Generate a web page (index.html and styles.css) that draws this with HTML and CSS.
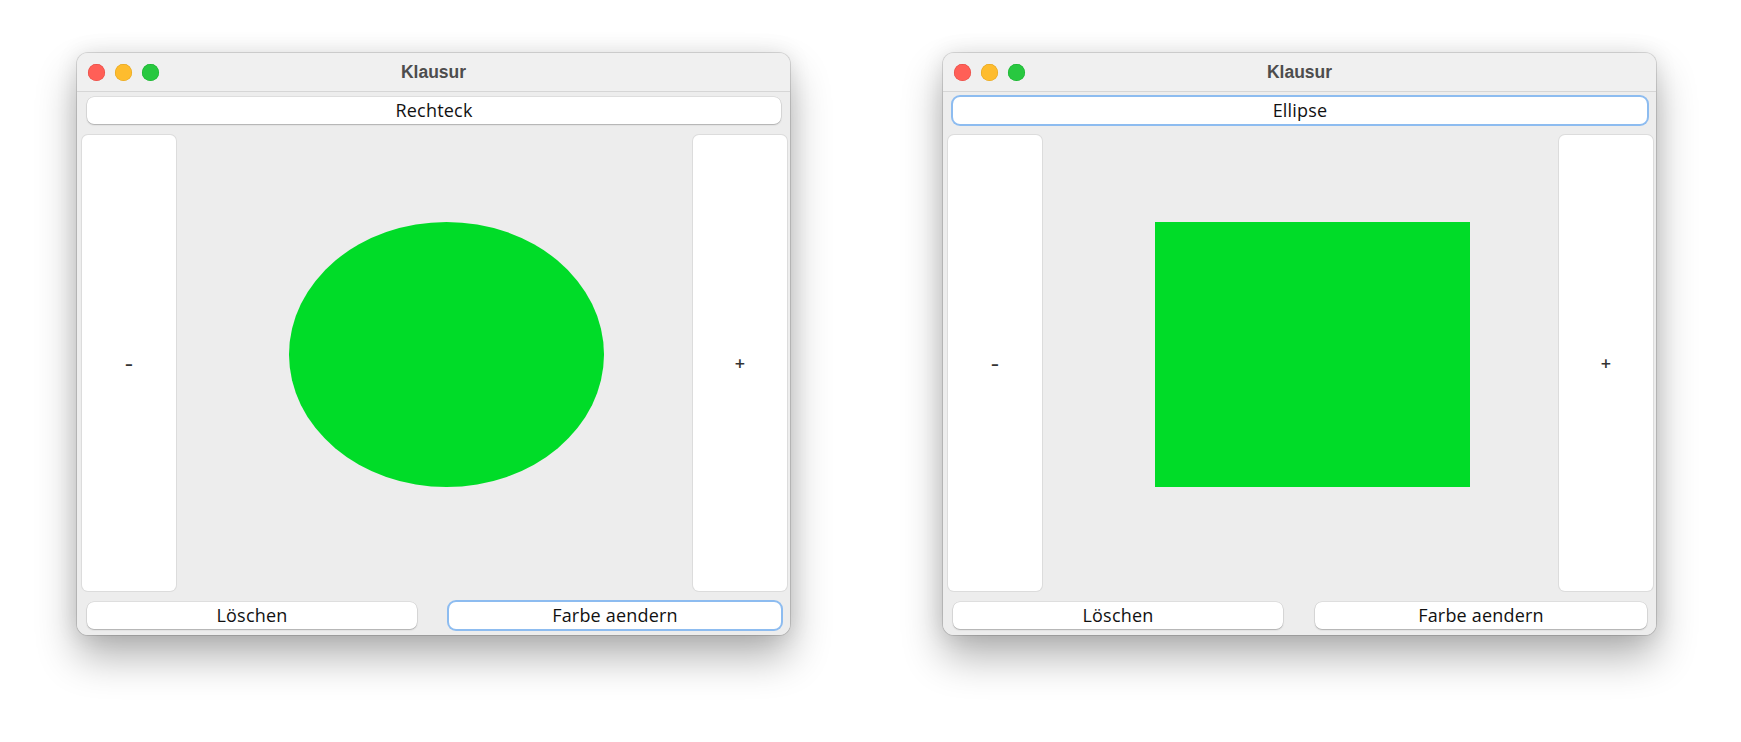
FILE: index.html
```html
<!DOCTYPE html>
<html lang="de">
<head>
<meta charset="utf-8">
<title>Klausur</title>
<link rel="stylesheet" href="styles.css">
</head>
<body>
<div class="desk">
  <div class="window">
    <div class="titlebar">
      <div class="lights">
        <span class="light red"></span>
        <span class="light yellow"></span>
        <span class="light green"></span>
      </div>
      <div class="title">Klausur</div>
    </div>
    <div class="content">
      <div class="top-row">
        <div class="btn wide">Rechteck</div>
      </div>
      <div class="mid-row">
        <div class="btn side"><span class="sign minus">-</span></div>
        <div class="canvas">
          <div class="shape ellipse"></div>
        </div>
        <div class="btn side"><span class="sign">+</span></div>
      </div>
      <div class="bottom-row">
        <div class="btn half left">Löschen</div>
        <div class="btn half right focus">Farbe aendern</div>
      </div>
    </div>
  </div>

  <div class="window">
    <div class="titlebar">
      <div class="lights">
        <span class="light red"></span>
        <span class="light yellow"></span>
        <span class="light green"></span>
      </div>
      <div class="title">Klausur</div>
    </div>
    <div class="content">
      <div class="top-row">
        <div class="btn wide focus">Ellipse</div>
      </div>
      <div class="mid-row">
        <div class="btn side"><span class="sign minus">-</span></div>
        <div class="canvas">
          <div class="shape rect"></div>
        </div>
        <div class="btn side"><span class="sign">+</span></div>
      </div>
      <div class="bottom-row">
        <div class="btn half left">Löschen</div>
        <div class="btn half right">Farbe aendern</div>
      </div>
    </div>
  </div>
</div>
</body>
</html>
```

FILE: styles.css
```css
* { box-sizing: border-box; }

html, body {
  margin: 0;
  padding: 0;
  background: #ffffff;
  width: 1741px;
  height: 742px;
  overflow: hidden;
}

.desk {
  display: flex;
  gap: 153px;
  padding-left: 77px;
  padding-top: 53px;
}

.window {
  width: 713px;
  height: 582px;
  border-radius: 11px;
  background: #ececec;
  overflow: hidden;
  box-shadow:
    0 0 0 1px rgba(0, 0, 0, 0.13),
    0 22px 40px rgba(0, 0, 0, 0.30),
    0 0 22px rgba(0, 0, 0, 0.10);
  display: flex;
  flex-direction: column;
}

.titlebar {
  height: 39px;
  flex: none;
  background: #f0f0f0;
  border-bottom: 1px solid #d6d6d6;
  display: flex;
  align-items: center;
  position: relative;
}

.lights {
  display: flex;
  gap: 10px;
  padding-left: 11px;
}

.light {
  width: 17px;
  height: 17px;
  border-radius: 50%;
  display: block;
}
.light.red { background: #ff5f57; box-shadow: inset 0 0 0 0.5px #e2463f; }
.light.yellow { background: #febc2e; box-shadow: inset 0 0 0 0.5px #e1a116; }
.light.green { background: #28c840; box-shadow: inset 0 0 0 0.5px #14ae2a; }

.title {
  position: absolute;
  left: 0;
  right: 0;
  top: 0;
  bottom: 0;
  display: flex;
  align-items: center;
  justify-content: center;
  font-family: "Liberation Sans", Arial, sans-serif;
  font-weight: 700;
  font-size: 17.5px;
  color: #4d4d4d;
  pointer-events: none;
}

.content {
  flex: 1;
  display: flex;
  flex-direction: column;
  background: #ededed;
}

.btn {
  background: #ffffff;
  display: flex;
  align-items: center;
  justify-content: center;
  padding-bottom: 2px;
  font-family: "Open Sans", "DejaVu Sans", sans-serif;
  font-size: 18px;
  letter-spacing: 0.2px;
  color: #111111;
  border-radius: 7px;
  box-shadow: 0 0 0 0.5px rgba(0, 0, 0, 0.12), 0 1px 1.5px rgba(0, 0, 0, 0.22);
}

.btn.focus {
  box-shadow: 0 0 0 2px #8dbcf0;
}

.top-row {
  padding: 5px 9px 0 10px;
}

.btn.wide {
  height: 27px;
}

.mid-row {
  display: flex;
  height: 456px;
  margin-top: 11px;
  padding-left: 5px;
  padding-right: 3px;
}

.btn.side {
  width: 94px;
  height: 100%;
  border-radius: 6px;
  box-shadow: 0 0 0 1px #dcdcdc;
  padding-bottom: 0;
}

.sign {
  font-weight: 600;
  color: #333333;
}

.sign.minus {
  display: inline-block;
  transform: scaleX(1.35);
}

.canvas {
  flex: 1;
  padding-left: 113px;
  padding-top: 87px;
}

.shape {
  width: 315px;
  height: 265px;
  background: #00dc28;
}

.shape.ellipse {
  border-radius: 50%;
}

.bottom-row {
  display: flex;
  margin-top: 11px;
  padding-left: 10px;
  padding-right: 9px;
  gap: 32px;
}

.btn.half {
  height: 27px;
}
.btn.half.left { width: 330px; }
.btn.half.right { flex: 1; }
```
